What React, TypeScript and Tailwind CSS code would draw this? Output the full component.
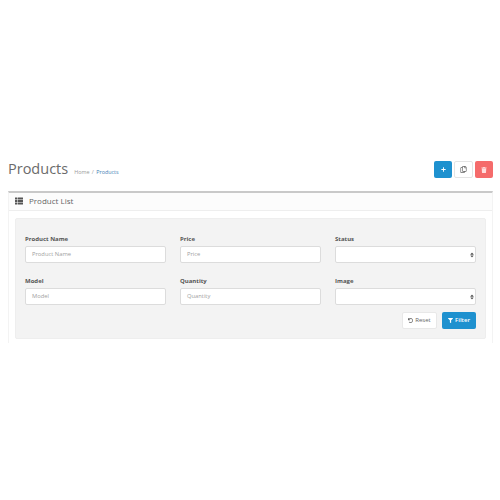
import { FaFilter, FaPlus, FaRegCopy, FaSort, FaThList, FaTrash, FaUndo } from "react-icons/fa";

function TextField({ label, placeholder }: { label: string; placeholder: string }) {
    return (
        <div className="w-[141px]">
            <div className="h-[15px] text-[6px] leading-[16px] font-bold text-[#555]">{label}</div>
            <div className="flex h-[17px] items-center rounded-[2px] border border-[#dcdcdc] bg-white pl-[6px] text-[5.8px] text-[#a0a0a0]">
                {placeholder}
            </div>
        </div>
    );
}

function SelectField({ label }: { label: string }) {
    return (
        <div className="w-[141px]">
            <div className="h-[15px] text-[6px] leading-[16px] font-bold text-[#555]">{label}</div>
            <div className="flex h-[17px] items-center justify-end rounded-[2px] border border-[#dcdcdc] bg-white pr-[1px] text-[#555]">
                <FaSort className="h-[6px] w-[4px]" />
            </div>
        </div>
    );
}

export default function App() {
    return (
        <div className="h-[500px] w-[500px] overflow-hidden bg-white pt-[161px] pr-[7px] pl-[8px] font-['Open_Sans',sans-serif]">
            <div className="flex h-[30px] items-start justify-between">
                <div className="flex items-baseline">
                    <h1 className="text-[14.5px] leading-[16px] text-[#6b6b6b]">Products</h1>
                    <div className="ml-[6px] text-[5.4px] text-[#999]">
                        Home <span className="mx-[1px]">/</span> <span className="text-[#3f7fb5]">Products</span>
                    </div>
                </div>
                <div className="flex gap-[2px]">
                    <div className="flex h-[17px] w-[18px] items-center justify-center rounded-[2px] bg-[#1e91cf] text-white">
                        <FaPlus className="h-[5px] w-[5px]" />
                    </div>
                    <div className="flex h-[17px] w-[19px] items-center justify-center rounded-[2px] border border-[#e4e4e4] bg-white text-[#666]">
                        <FaRegCopy className="h-[7px] w-[7px]" />
                    </div>
                    <div className="flex h-[17px] w-[18px] items-center justify-center rounded-[2px] bg-[#f56b6b] text-[#fdd]">
                        <FaTrash className="h-[6px] w-[6px]" />
                    </div>
                </div>
            </div>
            <div className="h-[152px] border-x border-t-2 border-x-[#f3f3f3] border-t-[#c9c9c9]">
                <div className="flex h-[18px] items-center gap-[6px] border-b border-[#eee] bg-[#fcfcfc] pb-[1px] pl-[6px] text-[8px] text-[#666]">
                    <FaThList className="h-[8px] w-[8px] text-[#555]" />
                    Product List
                </div>
                <div className="mx-[6px] mt-[7px] h-[121px] rounded-[2px] border border-[#eee] bg-[#f3f3f3] pt-[12px] pr-[9px] pl-[9px]">
                    <div className="grid grid-cols-[141px_141px_141px] gap-x-[14px] gap-y-[10px]">
                        <TextField label="Product Name" placeholder="Product Name" />
                        <TextField label="Price" placeholder="Price" />
                        <SelectField label="Status" />
                        <TextField label="Model" placeholder="Model" />
                        <TextField label="Quantity" placeholder="Quantity" />
                        <SelectField label="Image" />
                    </div>
                    <div className="mt-[7px] flex justify-end gap-[5px]">
                        <div className="flex h-[17px] w-[35px] items-center justify-center gap-[2px] rounded-[2px] border border-[#e8e8e8] bg-white text-[6px] text-[#666]">
                            <FaUndo className="h-[5px] w-[5px]" />
                            Reset
                        </div>
                        <div className="flex h-[17px] w-[34px] items-center justify-center gap-[2px] rounded-[2px] bg-[#1e91cf] text-[6px] font-semibold text-white">
                            <FaFilter className="h-[5px] w-[5px]" />
                            Filter
                        </div>
                    </div>
                </div>
            </div>
        </div>
    );
}
